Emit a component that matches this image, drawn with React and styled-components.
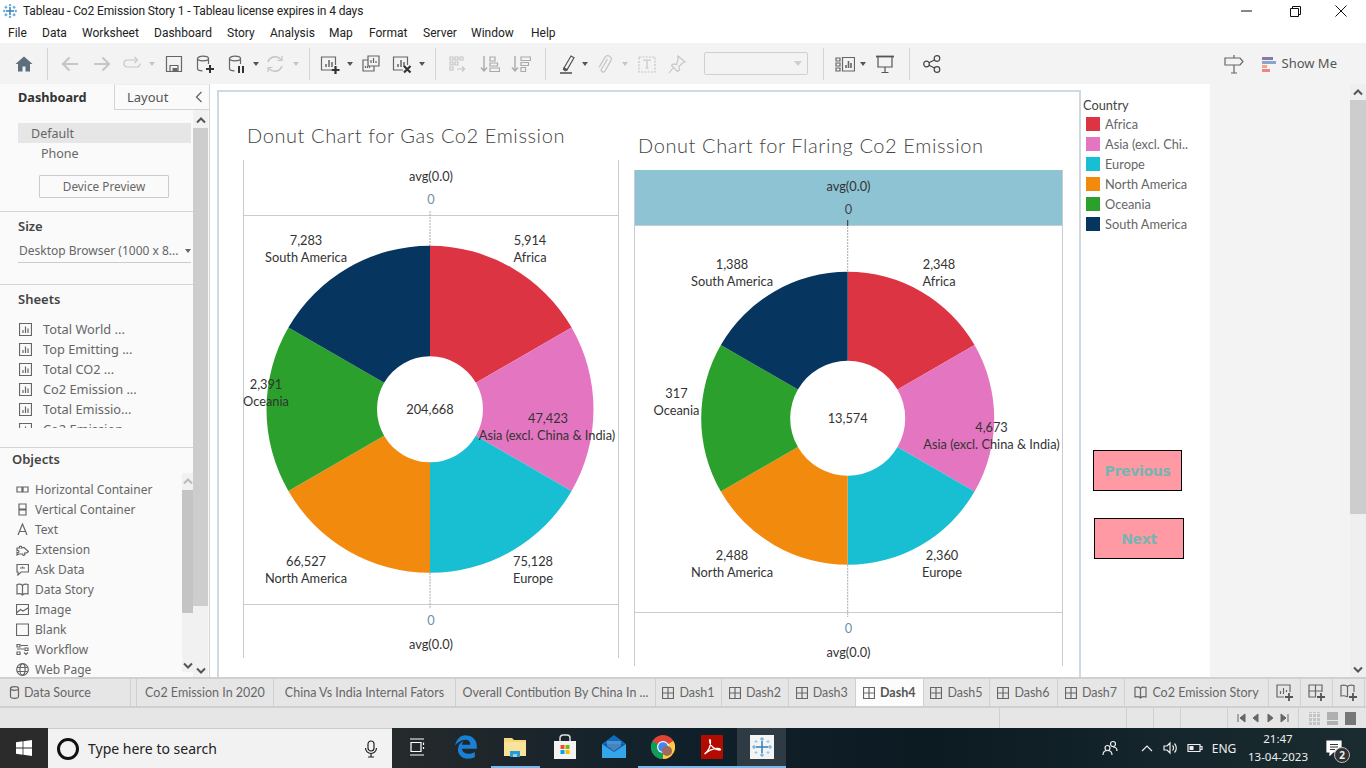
import React from 'react';
import styled, { createGlobalStyle } from 'styled-components';
import { FaEdgeLegacy } from 'react-icons/fa6';

const GlobalStyle = createGlobalStyle`
  html, body { margin: 0; padding: 0; overflow: hidden; background: #fff; }
  * { box-sizing: border-box; }
  body { font-family: "Noto Sans", "Open Sans", sans-serif; }
`;

const UI = `"Noto Sans", "Open Sans", sans-serif`;
const BOOK = `Lato, "Open Sans", sans-serif`;

/* ---------- icons ---------- */

const Svg = styled.svg`
  display: block;
  flex: none;
  fill: none;
  stroke: currentColor;
  stroke-width: 1.2;
  color: ${p => p.$color || '#666'};
`;

const Icon = ({ size = 20, box = 20, color, children }) => (
  <Svg width={size} height={size} viewBox={`0 0 ${box} ${box}`} $color={color}>{children}</Svg>
);

const OFF = '#c6c6c6';

const Home = () => (
  <Icon color="#5d6d7c"><path d="M10 2.500 1.500 10H4v7.500h4.500v-5h3v5H16V10h2.500z" fill="currentColor" stroke="none" /></Icon>
);
const Back = () => (
  <Icon color={OFF}><path d="M18 10H3M9.500 3.500 3 10l6.500 6.500" strokeWidth="2.200" /></Icon>
);
const Forward = () => (
  <Icon color={OFF}><path d="M2 10h15M10.500 3.500 17 10l-6.500 6.500" strokeWidth="2.200" /></Icon>
);
const RedoPill = () => (
  <Icon color={OFF}><path d="M14 6H5.500a3.500 3.500 0 0 0 0 7h9a3.500 3.500 0 0 0 3.500-3.500" /><path d="m12.500 3 3 3-3 3" /></Icon>
);
const Save = () => (
  <Icon><path d="M2.500 2.500h15v15h-15z" /><path d="M6 17.500v-6h8v6" /><path d="M8.500 14h5v3.500h-5z" fill="currentColor" stroke="none" /></Icon>
);
const Cylinder = () => (
  <>
    <ellipse cx="8" cy="4.500" rx="5.500" ry="2.300" />
    <path d="M2.500 4.500v10c0 1.300 2 2.300 5 2.300M13.500 4.500V10" />
  </>
);
const NewSource = () => (
  <Icon><Cylinder /><path d="M15 11v8M11 15h8" stroke="#333" strokeWidth="2" /></Icon>
);
const PauseSource = () => (
  <Icon><Cylinder /><path d="M12 12v7M16 12v7" stroke="#333" strokeWidth="2" /></Icon>
);
const Refresh = () => (
  <Icon color={OFF}><path d="M3 8a7.500 7.500 0 0 1 13-2.500M17 12a7.500 7.500 0 0 1-13 2.500" strokeWidth="1.600" /><path d="M17 2v4.500h-4.500M3 18v-4.500h4.500" /></Icon>
);
const Bars = () => <path d="M6 13V10M9 13V6M12 13V8" strokeWidth="1.500" />;
const NewSheet = () => (
  <Icon><path d="M11 16H1.500V3h14v8" /><Bars /><path d="M15.500 12v8M11.500 16h8" stroke="#333" strokeWidth="2.200" /></Icon>
);
const DupSheet = () => (
  <Icon size={18} box={18}><path d="M6 1h11v10H6z" /><path d="M9 8V5M11.500 8V3M14 8V6" /><path d="M6 5H1v11h11v-5" /><path d="M3.500 13v-2M5.500 13v-2M7.500 13v-2" /></Icon>
);
const ClearSheet = () => (
  <Icon><path d="M11 16H1.500V3h14v8" /><Bars /><path d="m12 12 6.500 6.500M18.500 12 12 18.500" stroke="#333" strokeWidth="2.200" /></Icon>
);
const GroupIco = () => (
  <Icon color={OFF}><path d="M3 3h3v3H3zM8 3h3v3H8zM13 3h3v3h-3zM3 8h3v3H3zM8 8h3v3H8zM3 13h3v3H3z" /><path d="M10 15h7M15 12.500l2.500 2.500-2.500 2.500" /></Icon>
);
const SortAsc = () => (
  <Icon color="#aaa"><path d="M4 2v15M1 13.500 4 17l3-3.500" strokeWidth="1.400" /><path d="M10 3h5v4h-5zM10 9h7.500v3H10zM10 14h9.500v3.500H10z" /></Icon>
);
const SortDesc = () => (
  <Icon color="#aaa"><path d="M4 2v15M1 13.500 4 17l3-3.500" strokeWidth="1.400" /><path d="M10 3h9.500v3.500H10zM10 8.500h7.500v3H10zM10 13.500h4.500v4H10z" /></Icon>
);
const Highlight = () => (
  <Icon color="#555"><path d="M6 14 13 2l3 1.800-7 12z" /><path d="M5.500 15.500 6 14l3 1.800-1.500 1z" fill="currentColor" /><path d="M2 19h12" strokeWidth="1.600" /></Icon>
);
const Clip = () => (
  <Icon color={OFF}><path d="M12.500 5 6.500 15a2 2 0 0 0 3.400 2.100l6-10.500a3.400 3.400 0 0 0-5.800-3.500L4 13.500" strokeWidth="1.300" /></Icon>
);
const TextBox = () => (
  <Icon color={OFF}><path d="M2 3h16v15H2z" strokeDasharray="2 1.300" /><path d="M7 7V6h6v1M10 6v8M8.500 14h3" /></Icon>
);
const Pin = () => (
  <Icon color={OFF}><path d="m11 2 7 6-2 .5-4 4 .5 3.500-2 1.500-6-6 2-1.500 3 .5 1.500-5z" /><path d="M6 14 2 19" /></Icon>
);
const FitIco = () => (
  <Icon size={20} box={20}><path d="M1 4h4v3H1zM1 9h4v3H1zM1 14h4v3H1z" /><path d="M7.500 3.500h12v13.500h-12z" /><path d="M11 14v-3M13.500 14V7M16 14V9" strokeWidth="1.600" /></Icon>
);
const Present = () => (
  <Icon color="#555"><path d="M1 2.500h18" strokeWidth="1.800" /><path d="M3 3v10h14V3M10 13v5M6.500 18.500h7" /></Icon>
);
const Share = () => (
  <Icon color="#444"><circle cx="15" cy="4.500" r="2.800" /><circle cx="4.500" cy="10" r="2.800" /><circle cx="15" cy="15.500" r="2.800" /><path d="M7 8.700 12.500 6M7 11.300l5.500 2.700" /></Icon>
);
const SignPost = () => (
  <Icon color="#666"><path d="M1 4h15l3 3.500-3 3.500H1z" /><path d="M10 1v3M10 11v8M7 19h6" /></Icon>
);
const ShowMeIco = () => (
  <Svg width="14" height="16" viewBox="0 0 14 16" style={{ stroke: 'none' }}>
    <rect x="0" y="1" width="11" height="3" fill="#8b77a3" />
    <rect x="0" y="5" width="14" height="3" fill="#86a6cf" />
    <rect x="0" y="9" width="5" height="3" fill="#f2a97a" />
    <rect x="0" y="13" width="8" height="3" fill="#f57f8a" />
  </Svg>
);
const SheetIco = () => (
  <Icon size={13} box={13} color="#666"><path d="M.5.500h12v12H.5z" /><path d="M4 10V7M6.500 10V3.500M9 10V5.500" /></Icon>
);
const DashIco = () => (
  <Icon size={12} box={12} color="#666"><path d="M.5.500h11v11H.5zM6 .5v11M.5 6h11" /></Icon>
);
const BookIco = () => (
  <Icon size={13} box={13} color="#666"><path d="M6.500 2.500C5 1 3 1 1 1.500V11c2-.5 4-.5 5.500 1 1.500-1.500 3.500-1.500 5.500-1V1.500c-2-.5-4-.5-5.500 1zM6.500 2.500V12" /></Icon>
);
const DbIco = () => (
  <Icon size={13} box={13} color="#666"><ellipse cx="6.500" cy="2.500" rx="4" ry="1.800" /><path d="M2.500 2.500v8c0 1 1.800 1.800 4 1.800s4-.8 4-1.800v-8" /></Icon>
);

const ObjectIcons = {
  hc: <><path d="M1 4h5v5H1zM7 4h5v5H7z" /></>,
  vc: <><path d="M3 1h7v5H3zM3 7h7v5H3z" /></>,
  text: <path d="M2 12 6.500 1 11 12M3.500 8.500h6" />,
  ext: <path d="M1 5h2.500a1.200 1.200 0 1 1 2 0L8 4.500l4.500 4-2 1.500H8a1.200 1.200 0 1 1-1.500 1H3L1 12V9.500a1.200 1.200 0 1 0 0-2z" />,
  ask: <path d="M1 1.500h11.500V9H5l-3 3V9H1zM6.500 3.500v2M4 5h5" />,
  story: <path d="M6.500 2.500C5 1 3 1 1 1.500V11c2-.5 4-.5 5.500 1 1.500-1.500 3.500-1.500 5.500-1V1.500c-2-.5-4-.5-5.500 1zM6.500 2.500V12" />,
  image: <path d="M.5 1.500h12v10H.5zM1 9.500l3.500-3L7 8l5-3" />,
  blank: <path d="M.5 1h12v11.500H.5z" />,
  flow: <path d="M1 1.500h3v2.500H1zM5 2.500h7M1 6h7M9 5h3v2.500H9zM1 9h3v2.500H1zM8 9.500l2 2 2-2" />,
  web: <><circle cx="6.500" cy="6.500" r="5.800" /><ellipse cx="6.500" cy="6.500" rx="2.600" ry="5.800" /><path d="M1 4.500h11M1 8.500h11" /></>,
};

/* ---------- window chrome ---------- */

const Page = styled.div`
  width: 1366px;
  height: 768px;
  display: flex;
  flex-direction: column;
  overflow: hidden;
  background: #fff;
  font-family: ${UI};
`;

const TitleBar = styled.div`
  height: 22px;
  display: flex;
  align-items: center;
  padding-left: 3px;
  font-family: Roboto, sans-serif;
  font-size: 12px;
  letter-spacing: -0.130px;
  color: #222;
`;

const TitleText = styled.span`
  margin-left: 6px;
  flex: 1;
`;

const WinBtn = styled.div`
  width: 46px;
  height: 22px;
  display: flex;
  align-items: center;
  justify-content: center;
  margin-right: ${p => p.$mr || 0}px;
`;

const MenuBar = styled.div`
  height: 21px;
  display: flex;
  align-items: center;
  font-family: Roboto, sans-serif;
  font-size: 12px;
  color: #222;
`;

const MenuItem = styled.span`
  width: ${p => p.$w}px;
  flex: none;
`;

const Toolbar = styled.div`
  height: 41px;
  display: flex;
  align-items: center;
  background: #f3f3f3;
`;

const Slot = styled.div`
  flex: none;
  margin-left: ${p => p.$gap}px;
  display: flex;
  align-items: center;
`;

const ToolSep = styled(Slot)`
  width: 1px;
  height: 32px;
  background: #d4d4d4;
`;

const Caret = styled(Slot)`
  width: 8px;
  justify-content: center;
  &::after {
    content: '';
    border-left: 3.500px solid transparent;
    border-right: 3.500px solid transparent;
    border-top: 4px solid ${p => (p.$off ? '#c6c6c6' : '#555')};
  }
`;

const Combo = styled(Slot)`
  width: 104px;
  height: 23px;
  justify-content: flex-end;
  padding-right: 5px;
  border: 1px solid #d0d0d0;
  border-radius: 2px;
  &::after {
    content: '';
    border-left: 4px solid transparent;
    border-right: 4px solid transparent;
    border-top: 5px solid #cfcfcf;
  }
`;

const ShowMe = styled.div`
  margin-left: auto;
  margin-right: 29px;
  display: flex;
  align-items: center;
  font-size: 13px;
  color: #555;
`;

const ShowMeLabel = styled.span`
  margin-left: 6px;
  position: relative;
  top: -1px;
`;

const toolLayout = [
  [14, Home], ['sep', 13], [12, Back], [12, Forward], [10, RedoPill], ['off', 6], [8, Save], [11, NewSource],
  [12, PauseSource], ['dd', 5], [5, Refresh], ['off', 7], ['sep', 9], [10, NewSheet], ['dd', 6], [8, DupSheet],
  [12, ClearSheet], ['dd', 6], ['sep', 9], [11, GroupIco], [13, SortAsc], [11, SortDesc], ['sep', 14], [12, Highlight],
  ['dd', 3], [6, Clip], ['off', 6], [8, TextBox], [10, Pin], ['combo', 17], ['sep', 15], [11, FitIco], ['dd', 4],
  [8, Present], ['sep', 14], [12, Share],
];

const Tools = () => (
  <Toolbar>
    {toolLayout.map(([a, b], i) => {
      if (a === 'sep') return <ToolSep key={i} $gap={b} />;
      if (a === 'dd') return <Caret key={i} $gap={b} />;
      if (a === 'off') return <Caret key={i} $gap={b} $off />;
      if (a === 'combo') return <Combo key={i} $gap={b} />;
      const Ico = b;
      return <Slot key={i} $gap={a}><Ico /></Slot>;
    })}
    <ShowMe>
      <SignPost />
      <Slot $gap={18}><ShowMeIco /></Slot>
      <ShowMeLabel>Show Me</ShowMeLabel>
    </ShowMe>
  </Toolbar>
);

/* ---------- sidebar ---------- */

const Main = styled.div`
  height: 593px;
  display: flex;
`;

const Sidebar = styled.aside`
  width: 210px;
  flex: none;
  display: flex;
  flex-direction: column;
  background: #fafafa;
  border-right: 1px solid #d4d4d4;
  font-size: 12.5px;
  color: #666;
`;

const SideTabs = styled.div`
  height: 26px;
  flex: none;
  display: flex;
`;

const SideTab = styled.div`
  display: flex;
  align-items: center;
  width: ${p => p.$w}px;
  padding-left: ${p => p.$pad}px;
  font-size: ${p => (p.$active ? 12.7 : 13)}px;
  font-weight: ${p => (p.$active ? 700 : 400)};
  color: ${p => (p.$active ? '#333' : '#555')};
  border-left: ${p => (p.$active ? 'none' : '1px solid #d4d4d4')};
  border-bottom: ${p => (p.$active ? 'none' : '1px solid #d4d4d4')};
  border-top: ${p => (p.$active ? 'none' : '1px solid #eee')};
  ${p => (p.$active ? '' : 'flex: 1; justify-content: space-between; padding-right: 6px;')}
`;

const SideBody = styled.div`
  flex: 1;
  min-height: 0;
  display: flex;
`;

const SideContent = styled.div`
  width: 193px;
  flex: none;
  display: flex;
  flex-direction: column;
`;

const Section = styled.section`
  height: ${p => p.$h}px;
  flex: none;
  padding-left: ${p => p.$left || 18}px;
  padding-top: ${p => p.$top || 0}px;
  border-bottom: ${p => (p.$last ? 'none' : '1px solid #d4d4d4')};
`;

const DeviceRow = styled.div`
  height: 20px;
  width: 173px;
  display: flex;
  align-items: center;
  padding-left: ${p => (p.$selected ? 13 : 23)}px;
  background: ${p => (p.$selected ? '#e6e6e6' : 'transparent')};
`;

const DeviceBtn = styled.div`
  width: 130px;
  height: 23px;
  margin: 12px 0 0 21px;
  padding-bottom: 1px;
  display: flex;
  align-items: center;
  justify-content: center;
  border: 1px solid #ccc;
  border-radius: 1px;
  font-size: 11.800px;
`;

const Heading = styled.h3`
  margin: 0;
  height: 16px;
  line-height: 16px;
  font-size: 13px;
  font-weight: 600;
  color: #444;
`;

const SizeSelect = styled.div`
  width: 173px;
  height: 24px;
  margin-top: 5px;
  display: flex;
  align-items: center;
  justify-content: space-between;
  padding: 0 0 0 1px;
  border-bottom: 1px solid #ccc;
  white-space: nowrap;
  font-size: 12px;
  &::after {
    content: '';
    border-left: 3.500px solid transparent;
    border-right: 3.500px solid transparent;
    border-top: 4px solid #666;
  }
`;

const SheetList = styled.div`
  height: 109px;
  margin-top: 12px;
  overflow: hidden;
  font-size: 12.800px;
`;

const SheetRow = styled.div`
  height: 20px;
  display: flex;
  align-items: center;
  gap: 11px;
  padding-left: 1px;
`;

const ObjectsWrap = styled.div`
  display: flex;
  margin-top: 6px;
  height: 199px;
`;

const ObjectList = styled.div`
  width: 170px;
  padding-top: 6px;
  font-size: 12px;
`;

const ObjectRow = styled.div`
  height: 20px;
  display: flex;
  align-items: center;
  gap: 6px;
  padding-left: 4px;
  white-space: nowrap;
`;

const Track = styled.div`
  width: ${p => p.$w}px;
  flex: none;
  display: flex;
  flex-direction: column;
  background: #f1f1f1;
  padding-top: ${p => p.$top || 0}px;
`;

const Thumb = styled.div`
  height: ${p => p.$h}px;
  flex: none;
  background: ${p => p.$color || '#cdcdcd'};
`;

const ArrowCell = styled.div`
  height: ${p => p.$h || 16}px;
  flex: none;
  display: flex;
  align-items: center;
  justify-content: center;
  margin-top: ${p => (p.$end ? 'auto' : 0)};
`;

const Chev = ({ down, light }) => (
  <svg width="10" height="7" viewBox="0 0 10 7">
    <path d={down ? 'M1 1.500 5 5.500l4-4' : 'M1 5.500 5 1.500l4 4'} fill="none" stroke={light ? '#bbb' : '#555'} strokeWidth="2" />
  </svg>
);

const Chev2 = () => (
  <svg width="8" height="12" viewBox="0 0 8 12"><path d="M6.500 1 1.500 6l5 5" fill="none" stroke="#666" strokeWidth="1.300" /></svg>
);

const sheets = ['Total World ...', 'Top Emitting ...', 'Total CO2 ...', 'Co2 Emission ...', 'Total Emissio...', 'Co2 Emission'];
const objects = [
  ['hc', 'Horizontal Container'], ['vc', 'Vertical Container'], ['text', 'Text'], ['ext', 'Extension'], ['ask', 'Ask Data'],
  ['story', 'Data Story'], ['image', 'Image'], ['blank', 'Blank'], ['flow', 'Workflow'], ['web', 'Web Page'],
];

const LeftPanel = () => (
  <Sidebar>
    <SideTabs>
      <SideTab $active $w={114} $pad={18}>Dashboard</SideTab>
      <SideTab $pad={12}>Layout<Chev2 /></SideTab>
    </SideTabs>
    <SideBody>
      <SideContent>
        <Section $h={102} $top={13}>
          <DeviceRow $selected>Default</DeviceRow>
          <DeviceRow>Phone</DeviceRow>
          <DeviceBtn>Device Preview</DeviceBtn>
        </Section>
        <Section $h={73} $top={6}>
          <Heading>Size</Heading>
          <SizeSelect>Desktop Browser (1000 x 8...</SizeSelect>
        </Section>
        <Section $h={163} $top={6}>
          <Heading>Sheets</Heading>
          <SheetList>
            {sheets.map(s => (
              <SheetRow key={s}><SheetIco />{s}</SheetRow>
            ))}
          </SheetList>
        </Section>
        <Section $h={229} $top={3} $left={12} $last>
          <Heading>Objects</Heading>
          <ObjectsWrap>
            <ObjectList>
              {objects.map(([k, label]) => (
                <ObjectRow key={k}><Icon size={13} box={13} color="#666">{ObjectIcons[k]}</Icon>{label}</ObjectRow>
              ))}
            </ObjectList>
            <Track $w={11}>
              <ArrowCell $h={17}><Chev light /></ArrowCell>
              <Thumb $h={123} $color="#c4c4c4" />
              <ArrowCell $end $h={14}><Chev down /></ArrowCell>
            </Track>
          </ObjectsWrap>
        </Section>
      </SideContent>
      <Track $w={15} $top={2}>
        <ArrowCell><Chev /></ArrowCell>
        <Thumb $h={478} />
        <ArrowCell $end $h={14}><Chev down /></ArrowCell>
      </Track>
    </SideBody>
  </Sidebar>
);

/* ---------- charts ---------- */

const Stage = styled.div`
  flex: 1;
  display: flex;
  background: #f3f3f3;
`;

const CanvasArea = styled.div`
  width: 1000px;
  flex: none;
  display: flex;
  background: #fff;
  padding: 6px 0 0 7px;
`;

const Frame = styled.div`
  width: 864px;
  flex: none;
  display: flex;
  gap: 15px;
  padding-left: 24px;
  overflow: hidden;
  border: 2px solid #cfd9e2;
  border-bottom: none;
`;

const ChartCol = styled.div`
  width: ${p => p.$w}px;
  flex: none;
  padding-top: ${p => p.$top}px;
`;

const ChartTitle = styled.h2`
  margin: 0;
  height: 44px;
  padding-left: 4px;
  line-height: 38px;
  font-family: ${BOOK};
  font-size: 20px;
  font-weight: 300;
  letter-spacing: 0.600px;
  color: #444;
  white-space: nowrap;
`;

const ChartBox = styled.div`
  border-left: 1px solid #c8ccd2;
  border-right: 1px solid #c8ccd2;
`;

const AxisPane = styled.div`
  height: ${p => p.$h}px;
  display: flex;
  flex-direction: ${p => (p.$bottom ? 'column-reverse' : 'column')};
  justify-content: ${p => (p.$bottom ? 'flex-end' : 'flex-start')};
  align-items: center;
  gap: ${p => (p.$bottom ? 8 : 7)}px;
  padding: ${p => (p.$bottom ? 7 : 8)}px 0 0;
  background: ${p => (p.$tint ? '#8dc3d3' : 'transparent')};
  border-bottom: ${p => (p.$bottom ? 'none' : '1px solid #c8ccd2')};
  border-top: ${p => (p.$bottom ? '1px solid #c8ccd2' : 'none')};
  font-family: ${BOOK};
  font-size: 12.800px;
  line-height: 16px;
`;

const AxisName = styled.span`
  color: #333;
`;

const AxisZero = styled.span`
  color: ${p => (p.$tint ? '#444' : '#6f8fa3')};
`;

const PlotSvg = styled.svg`
  display: block;
  overflow: visible;
`;

const DataLabel = styled.text`
  font-family: ${BOOK};
  font-size: 12.800px;
  fill: ${p => p.$fill || '#333'};
  text-anchor: middle;
  dominant-baseline: central;
`;

const COLORS = ['#dc3442', '#e476c1', '#18bfd2', '#f28a0d', '#2ca02c', '#06355f'];

const slice = (cx, cy, r, hole, i) => {
  const a0 = (i * Math.PI) / 3;
  const a1 = ((i + 1) * Math.PI) / 3;
  const p = (rad, a) => `${(cx + rad * Math.sin(a)).toFixed(2)} ${(cy - rad * Math.cos(a)).toFixed(2)}`;
  return `M${p(hole, a0)}L${p(r, a0)}A${r} ${r} 0 0 1 ${p(r, a1)}L${p(hole, a1)}A${hole} ${hole} 0 0 0 ${p(hole, a0)}Z`;
};

const Donut = ({ width, height, cx, cy, r, hole, total, labels, tick }) => (
  <PlotSvg width={width} height={height} viewBox={`0 0 ${width} ${height}`}>
    <path d={`M${cx} -5V${cy - r}M${cx} ${cy + r}V${height + 5}`} stroke="#aaa" strokeWidth="1" strokeDasharray="2 1" fill="none" />
    {tick && <path d={`M${cx} -6V0`} stroke="#333" strokeWidth="1" />}
    {COLORS.map((c, i) => <path key={c} d={slice(cx, cy, r, hole, i)} fill={c} />)}
    <DataLabel x={cx} y={cy}>{total}</DataLabel>
    {labels.map(l => (
      <g key={l.name}>
        <DataLabel x={l.vx ?? l.x} y={l.y}>{l.value}</DataLabel>
        <DataLabel x={l.x} y={l.y + 17}>{l.name}</DataLabel>
      </g>
    ))}
  </PlotSvg>
);

const gasLabels = [
  { name: 'South America', value: '7,283', x: 62, y: 24 },
  { name: 'Africa', value: '5,914', x: 286, y: 24 },
  { name: 'Oceania', value: '2,391', x: 22, y: 168 },
  { name: 'Asia (excl. China & India)', value: '47,423', x: 303, vx: 304, y: 202 },
  { name: 'Europe', value: '75,128', x: 289, y: 345 },
  { name: 'North America', value: '66,527', x: 62, y: 345 },
];

const flareLabels = [
  { name: 'South America', value: '1,388', x: 97, y: 38 },
  { name: 'Africa', value: '2,348', x: 304, y: 38 },
  { name: 'Oceania', value: '317', x: 41.500, y: 167 },
  { name: 'Asia (excl. China & India)', value: '4,673', x: 356.500, y: 201 },
  { name: 'Europe', value: '2,360', x: 307, y: 329 },
  { name: 'North America', value: '2,488', x: 97, y: 329 },
];

const Chart = ({ title, w, top, plotH, headH, footH, tint, donut }) => (
  <ChartCol $w={w} $top={top}>
    <ChartTitle>{title}</ChartTitle>
    <ChartBox>
      <AxisPane $h={headH} $tint={tint}>
        <AxisName>avg(0.0)</AxisName>
        <AxisZero $tint={tint}>0</AxisZero>
      </AxisPane>
      <Donut width={w - 2} height={plotH} tick={tint} {...donut} />
      <AxisPane $h={footH} $bottom>
        <AxisName>avg(0.0)</AxisName>
        <AxisZero>0</AxisZero>
      </AxisPane>
    </ChartBox>
  </ChartCol>
);

/* ---------- legend and buttons ---------- */

const LegendCol = styled.div`
  flex: 1;
  display: flex;
  flex-direction: column;
  padding: 7px 0 0 2px;
  font-family: ${BOOK};
  font-size: 12.800px;
  color: #666;
`;

const LegendTitle = styled.div`
  height: 16px;
  line-height: 16px;
  margin-bottom: 1px;
  color: #444;
`;

const LegendRow = styled.div`
  height: 20px;
  display: flex;
  align-items: center;
  gap: 5px;
  padding-left: 3px;
  white-space: nowrap;
`;

const Swatch = styled.span`
  width: 14px;
  height: 14px;
  flex: none;
  background: ${p => p.$color};
`;

const NavButton = styled.div`
  width: ${p => p.$w}px;
  height: 41px;
  margin-left: ${p => p.$left}px;
  margin-top: ${p => p.$top}px;
  display: flex;
  align-items: center;
  justify-content: center;
  background: #ff99a3;
  border: 1px solid #000;
  font-family: "DejaVu Sans", sans-serif;
  font-size: 14px;
  letter-spacing: -0.300px;
  font-weight: 700;
  color: #7ab4b0;
`;

const PageScroll = styled(Track)`
  margin-left: auto;
  background: #efefef;
`;

const legend = ['Africa', 'Asia (excl. Chi..', 'Europe', 'North America', 'Oceania', 'South America'];

/* ---------- tabs, status and taskbar ---------- */

const TabBar = styled.div`
  height: 31px;
  flex: none;
  display: flex;
  background: #e6e6e6;
  border-top: 2px solid #d0d0d0;
  border-bottom: 2px solid #d0d0d0;
  font-family: ${BOOK};
  font-size: 12.500px;
  color: #666;
`;

const SheetTab = styled.div`
  width: ${p => p.$w}px;
  flex: none;
  display: flex;
  align-items: center;
  justify-content: ${p => (p.$left ? 'flex-start' : 'center')};
  gap: ${p => (p.$left ? 3 : 5)}px;
  padding-left: ${p => (p.$left ? p.$left : 0)}px;
  white-space: nowrap;
  border-right: 1px solid #d0d0d0;
  background: ${p => (p.$active ? '#fcfcfc' : 'transparent')};
  font-weight: ${p => (p.$active ? 700 : 400)};
  color: ${p => (p.$active ? '#555' : '#666')};
  margin-left: ${p => p.$gap || 0}px;
  ${p => (p.$gap ? 'border-left: 1px solid #d0d0d0;' : '')}
`;

const NewTabIcon = ({ children }) => (
  <Icon size={18} box={18} color="#666">
    {children}
    <path d="M13 9v8M9 13h8" stroke="#555" strokeWidth="1.800" />
  </Icon>
);

const StatusBar = styled.div`
  height: 20px;
  flex: none;
  display: flex;
  background: #e6e6e6;
`;

const StatusCell = styled.div`
  width: ${p => p.$w}px;
  flex: none;
  display: flex;
  align-items: center;
  justify-content: space-around;
  padding: ${p => (p.$pad ? '0 6px' : 0)};
  border-left: ${p => (p.$plain ? 'none' : '1px solid #d0d0d0')};
`;

const Pager = styled.svg`
  display: block;
  fill: #666;
`;

const ViewSquare = styled.div`
  width: 11px;
  height: 13px;
  background-color: ${p => p.$tone};
  background-image: ${p => {
    if (p.$kind === 'grid') {
      return 'repeating-linear-gradient(90deg, transparent 0 3px, #e6e6e6 3px 4px), repeating-linear-gradient(0deg, transparent 0 3px, #e6e6e6 3px 4px)';
    }
    if (p.$kind === 'split') {
      return 'linear-gradient(180deg, transparent 0 8px, #e6e6e6 8px 9px, transparent 9px)';
    }
    return 'none';
  }};
`;

const Taskbar = styled.div`
  height: 40px;
  flex: none;
  display: flex;
  color: #fff;
  background: linear-gradient(90deg, #2b2b2b 0, #262a2b 28%, #10202a 50%, #0c1a22 68%, #14252b 85%, #1b2c30 100%);
`;

const StartBtn = styled.div`
  width: 48px;
  display: flex;
  align-items: center;
  justify-content: center;
`;

const SearchBox = styled.div`
  width: 344px;
  display: flex;
  align-items: center;
  padding: 0 0 0 9px;
  gap: 9px;
  background: #f2f2f2;
  border-top: 1px solid #ccc;
  color: #222;
  font-size: 14px;
`;

const SearchRing = styled.span`
  width: 22px;
  height: 22px;
  flex: none;
  border: 3px solid #111;
  border-radius: 50%;
`;

const SearchHint = styled.span`
  flex: 1;
`;

const MicWrap = styled.span`
  margin-right: 12px;
`;

const TaskApps = styled.div`
  display: flex;
`;

const TaskApp = styled.div`
  width: 49.300px;
  display: flex;
  align-items: center;
  justify-content: center;
  background: ${p => (p.$current ? '#2f3b44' : 'transparent')};
  border-bottom: 2px solid ${p => (p.$open ? '#76b9ed' : 'transparent')};
`;

const Tray = styled.div`
  margin-left: auto;
  margin-right: 12px;
  display: flex;
  align-items: center;
  font-size: 12px;
  color: #eee;
`;

const TrayCell = styled.div`
  width: ${p => p.$w}px;
  display: flex;
  align-items: center;
  justify-content: center;
`;

const Clock = styled.div`
  width: 70px;
  text-align: center;
  line-height: 18px;
  font-size: 11.500px;
`;

const NotifyCell = styled.div`
  width: 41px;
  height: 100%;
  display: flex;
  align-items: center;
  justify-content: center;
  position: relative;
`;

const Badge = styled.span`
  position: absolute;
  left: 21px;
  top: 19px;
  width: 16px;
  height: 16px;
  border-radius: 50%;
  background: #333;
  border: 1px solid #bbb;
  font-size: 10px;
  font-weight: 700;
  line-height: 14px;
  text-align: center;
  color: #eee;
`;

const WindowsLogo = () => (
  <svg width="16" height="16" viewBox="0 0 16 16" fill="#fff">
    <path d="M0 2.300 6.600 1.300v6.300H0zM7.400 1.200 16 0v7.600H7.400zM0 8.400h6.600v6.300L0 13.700zM7.400 8.400H16V16l-8.600-1.200z" />
  </svg>
);

const FolderLogo = () => (
  <svg width="24" height="22" viewBox="0 0 24 22">
    <path d="M1 2h8l2 2h12v16H1z" fill="#f5d77e" />
    <path d="M1 6h22v14H1z" fill="#f9e39a" />
    <path d="M7 15h10v6H7z" fill="#2a9ad6" />
    <path d="M10 18h4v3h-4z" fill="#8fd3f4" />
  </svg>
);

const StoreLogo = () => (
  <svg width="24" height="26" viewBox="0 0 24 26">
    <path d="M7 8V4a3 3 0 0 1 3-3h4a3 3 0 0 1 3 3v4" fill="none" stroke="#ddd" strokeWidth="1.500" />
    <path d="M1 7h22v18H1z" fill="#f3f3f3" />
    <path d="M7.500 11H11.500v4H7.500z" fill="#f25022" />
    <path d="M12.500 11h4v4h-4z" fill="#7fba00" />
    <path d="M7.500 16h4v4h-4z" fill="#00a4ef" />
    <path d="M12.500 16h4v4h-4z" fill="#ffb900" />
  </svg>
);

const MailLogo = () => (
  <svg width="24" height="24" viewBox="0 0 24 24">
    <path d="M0 9 12 0l12 9v14H0z" fill="#0f6cbd" />
    <path d="M0 9h24v14H0z" fill="#35a5ea" />
    <path d="M0 9l12 8 12-8" fill="#0c5aa6" />
    <path d="M5 6h14v5l-7 5-7-5z" fill="#fff" opacity=".25" />
  </svg>
);

const ChromeLogo = () => (
  <svg width="24" height="24" viewBox="0 0 24 24">
    <circle cx="12" cy="12" r="12" fill="#db4437" />
    <path d="M12 12 1.600 6A12 12 0 0 0 12 24z" fill="#0f9d58" />
    <path d="M12 12V24A12 12 0 0 0 22.400 6z" fill="#ffcd40" />
    <circle cx="12" cy="12" r="6" fill="#fff" />
    <circle cx="12" cy="12" r="4.800" fill="#4285f4" />
    <circle cx="16" cy="16" r="5" fill="#9c6b5b" />
  </svg>
);

const PdfLogo = () => (
  <svg width="22" height="24" viewBox="0 0 22 24">
    <rect width="22" height="24" rx="1" fill="#b30b00" />
    <path d="M3.500 19c4-3 6-8 6-12 0-3-1-3-1-1 0 4 5 9 10 9 2 0 1-1.500-2-1.500-4 0-9 2-13 5.500z" fill="none" stroke="#fff" strokeWidth="1.300" />
  </svg>
);

const TableauLogo = () => (
  <svg width="24" height="24" viewBox="0 0 24 24">
    <rect width="24" height="24" fill="#f4f4f4" />
    <path d="M12 6v12M6 12h12" stroke="#2f7fb8" strokeWidth="1.500" />
    <path d="M12 2v4M10 4h4M12 18v4M10 20h4M2 12h4M4 10v4M18 12h4M20 10v4" stroke="#5aa3d0" strokeWidth="1" />
    <path d="M6 5v3M4.500 6.500h3M18 5v3M16.500 6.500h3M6 16v3M4.500 17.500h3M18 16v3M16.500 17.500h3" stroke="#9bc4dc" strokeWidth="1" />
  </svg>
);

const SmallTableau = () => (
  <svg width="14" height="14" viewBox="0 0 24 24">
    <path d="M12 5v14M5 12h14" stroke="#2f7fb8" strokeWidth="2.500" />
    <path d="M12 0v4M10 2h4M12 20v4M10 22h4M0 12h4M2 10v4M20 12h4M22 10v4M5 3v5M2.500 5.500h5M19 3v5M16.500 5.500h5M5 16v5M2.500 18.500h5M19 16v5M16.500 18.500h5" stroke="#5aa3d0" strokeWidth="2" />
  </svg>
);

const gasDonut = { cx: 186, cy: 193.300, r: 163.500, hole: 53, total: '204,668', labels: gasLabels };
const flareDonut = { cx: 212.700, cy: 192.300, r: 146.500, hole: 57.500, total: '13,574', labels: flareLabels };

const menus = [['File', 34], ['Data', 40], ['Worksheet', 72], ['Dashboard', 73], ['Story', 43], ['Analysis', 59], ['Map', 40], ['Format', 54], ['Server', 48], ['Window', 60], ['Help', 40]];

const plainTabs = [['Co2 Emission In 2020', 138], ['China Vs India Internal Fators', 182], ['Overall Contibution By China In ...', 200]];
const dashTabs = [['Dash1', 66], ['Dash2', 67], ['Dash3', 66.500], ['Dash4', 68.500], ['Dash5', 66], ['Dash6', 68], ['Dash7', 67]];

export default function App() {
  return (
    <Page>
      <GlobalStyle />
      <TitleBar>
        <SmallTableau />
        <TitleText>Tableau - Co2 Emission Story 1 - Tableau license expires in 4 days</TitleText>
        <WinBtn $mr={3}>
          <svg width="11" height="2" viewBox="0 0 11 2"><path d="M0 1h11" stroke="#111" /></svg>
        </WinBtn>
        <WinBtn>
          <svg width="11" height="11" viewBox="0 0 11 11"><path d="M.5 2.500h8v8h-8zM2.500 2.500v-2h8v8h-2" fill="none" stroke="#111" /></svg>
        </WinBtn>
        <WinBtn $mr={2}>
          <svg width="12" height="12" viewBox="0 0 12 12"><path d="m.5.500 11 11M11.500.500l-11 11" stroke="#111" /></svg>
        </WinBtn>
      </TitleBar>
      <MenuBar>
        <Slot $gap={8} />
        {menus.map(([m, w]) => <MenuItem key={m} $w={w}>{m}</MenuItem>)}
      </MenuBar>
      <Tools />
      <Main>
        <LeftPanel />
        <Stage>
          <CanvasArea>
            <Frame>
              <Chart title="Donut Chart for Gas Co2 Emission" w={376} top={24} headH={56} plotH={388} footH={54} donut={gasDonut} />
              <Chart title="Donut Chart for Flaring Co2 Emission" w={429} top={34} headH={56} plotH={386} footH={54} tint donut={flareDonut} />
            </Frame>
            <LegendCol>
              <LegendTitle>Country</LegendTitle>
              {legend.map((l, i) => (
                <LegendRow key={l}><Swatch $color={COLORS[i]} />{l}</LegendRow>
              ))}
              <NavButton $w={89} $left={10} $top={216}>Previous</NavButton>
              <NavButton $w={90} $left={11} $top={27}>Next</NavButton>
            </LegendCol>
          </CanvasArea>
          <PageScroll $w={16}>
            <ArrowCell><Chev /></ArrowCell>
            <Thumb $h={414} />
            <ArrowCell $end><Chev down /></ArrowCell>
          </PageScroll>
        </Stage>
      </Main>
      <TabBar>
        <SheetTab $w={131} $left={8}><DbIco />Data Source</SheetTab>
        {plainTabs.map(([t, w], i) => <SheetTab key={t} $w={w} $gap={i === 0 ? 5 : 0}>{t}</SheetTab>)}
        {dashTabs.map(([t, w]) => (
          <SheetTab key={t} $w={w} $active={t === 'Dash4'}><DashIco />{t}</SheetTab>
        ))}
        <SheetTab $w={144}><BookIco />Co2 Emission Story</SheetTab>
        <SheetTab $w={32}><NewTabIcon><path d="M8 13H1V1h13v7" /><path d="M4.500 10V7M7.500 10V4M10.500 8V6" /></NewTabIcon></SheetTab>
        <SheetTab $w={32}><NewTabIcon><path d="M8 13H1V1h13v7M7.500 1v12M1 7h13" /></NewTabIcon></SheetTab>
        <SheetTab $w={32}><NewTabIcon><path d="M7.500 2.500C6 1 3 1 1 1.500V12c2-.5 4-.5 6.500 1M7.500 2.500C9 1 12 1 14 1.500V8M7.500 2.500V13" /></NewTabIcon></SheetTab>
      </TabBar>
      <StatusBar>
        <StatusCell $w={999} $plain />
        <StatusCell $w={127} />
        <StatusCell $w={27} />
        <StatusCell $w={27} />
        <StatusCell $w={47} />
        <StatusCell $w={71} $pad>
          {['M1 1v8M8 1 3 5l5 4z', 'M7 1 2 5l5 4z', 'M2 1l5 4-5 4z', 'M8 1v8M1 1l5 4-5 4z'].map(d => (
            <Pager key={d} width="9" height="10" viewBox="0 0 9 10"><path d={d} stroke="#666" /></Pager>
          ))}
        </StatusCell>
        <StatusCell $w={68} $pad>
          <ViewSquare $tone="#c4c4c4" $kind="grid" />
          <ViewSquare $tone="#b0b0b0" $kind="split" />
          <ViewSquare $tone="#777" />
        </StatusCell>
      </StatusBar>
      <Taskbar>
        <StartBtn><WindowsLogo /></StartBtn>
        <SearchBox>
          <SearchRing />
          <SearchHint>Type here to search</SearchHint>
          <MicWrap>
            <Icon size={18} box={18} color="#222"><rect x="6" y="1" width="6" height="10" rx="3" /><path d="M3.500 8a5.500 5.500 0 0 0 11 0M9 13.500V17M6 17h6" /></Icon>
          </MicWrap>
        </SearchBox>
        <TaskApps>
          <TaskApp>
            <Icon size={18} box={18} color="#fff"><path d="M2 1h14M2 17h14M3 4.500h10v9H3zM15.500 4.500V7M15.500 9v2" /></Icon>
          </TaskApp>
          <TaskApp><FaEdgeLegacy size={24} color="#1a7fd6" /></TaskApp>
          <TaskApp $open><FolderLogo /></TaskApp>
          <TaskApp><StoreLogo /></TaskApp>
          <TaskApp><MailLogo /></TaskApp>
          <TaskApp $open><ChromeLogo /></TaskApp>
          <TaskApp $open><PdfLogo /></TaskApp>
          <TaskApp $open $current><TableauLogo /></TaskApp>
        </TaskApps>
        <Tray>
          <TrayCell $w={26}>
            <Icon size={16} box={16} color="#eee"><circle cx="5.500" cy="8" r="2.500" /><path d="M1 15c0-3 2-4.500 4.500-4.500S10 12 10 15" /><circle cx="11" cy="4" r="2.500" /><path d="M11 7c2 0 4 1 4 4" /></Icon>
          </TrayCell>
          <TrayCell $w={14} />
          <TrayCell $w={20}>
            <Icon size={14} box={14} color="#eee"><path d="m2 10 5-5 5 5" /></Icon>
          </TrayCell>
          <TrayCell $w={28}>
            <Icon size={16} box={16} color="#eee"><path d="M1 6v4h3l3 3V3L4 6zM9.500 5.500a3.500 3.500 0 0 1 0 5M11.500 3.500a6.500 6.500 0 0 1 0 9" /></Icon>
          </TrayCell>
          <TrayCell $w={20}>
            <Icon size={16} box={16} color="#eee"><path d="M1 4.500h12v7H1zM13 6.500h2v3h-2" /><path d="M2.500 6h4v4h-4z" fill="#eee" stroke="none" /></Icon>
          </TrayCell>
          <TrayCell $w={38}>ENG</TrayCell>
          <Clock>21:47<br />13-04-2023</Clock>
          <NotifyCell>
            <Icon size={16} box={16} color="#fff"><path d="M1 1h14v11H7l-3 3v-3H1z" fill="#fff" /><path d="M4 4.500h8M4 7h8M4 9.500h5" stroke="#333" /></Icon>
            <Badge>2</Badge>
          </NotifyCell>
        </Tray>
      </Taskbar>
    </Page>
  );
}
